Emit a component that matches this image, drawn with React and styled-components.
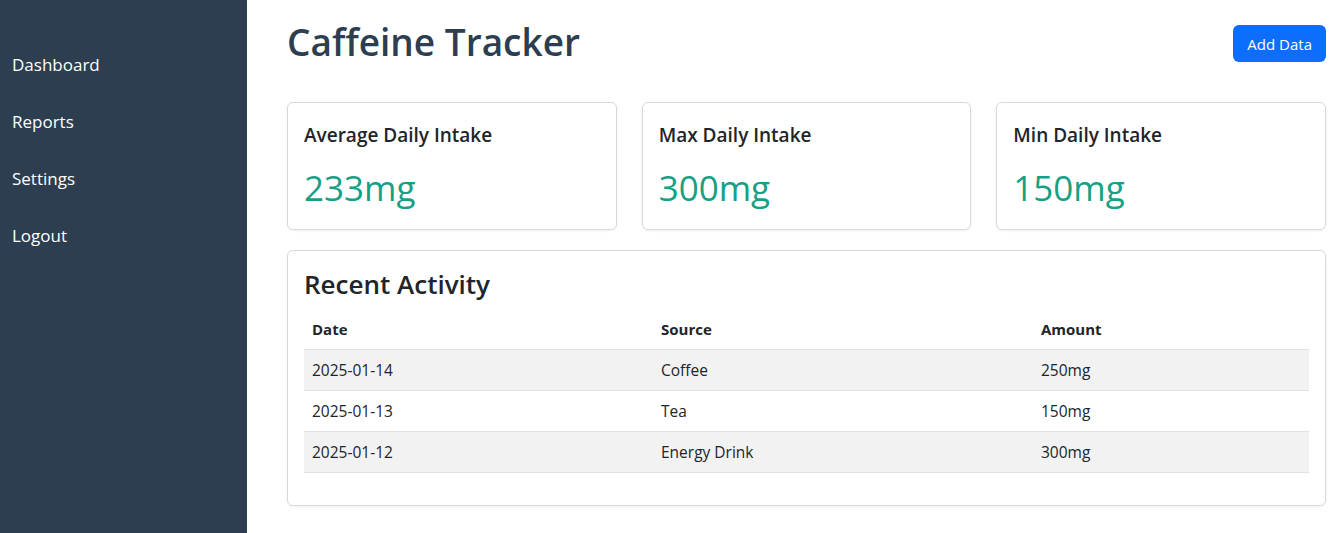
import React from "react";
import styled, { createGlobalStyle } from "styled-components";

const Global = createGlobalStyle`
  html, body { margin: 0; padding: 0; }
  body {
    font-family: "Open Sans", "Noto Sans", "Liberation Sans", sans-serif;
    color: #212529;
    background: #fff;
  }
  * { box-sizing: border-box; }
`;

const Layout = styled.div`
  display: flex;
  min-height: 533px;
`;

const Sidebar = styled.nav`
  width: 247px;
  flex: 0 0 247px;
  background: #2c3e50;
  padding-top: 36px;
`;

const NavList = styled.ul`
  list-style: none;
  margin: 0;
  padding: 0;
`;

const NavItem = styled.li`
  padding: 15px 12px;
  font-size: 17px;
  line-height: 27px;
  color: #fff;
`;

const Main = styled.main`
  flex: 1;
  padding: 20px 14px 20px 40px;
`;

const Header = styled.header`
  display: flex;
  justify-content: space-between;
  align-items: center;
  height: 48px;
  margin-bottom: 34px;
`;

const Title = styled.h1`
  margin: -5px 0 0;
  font-size: 37px;
  font-weight: 600;
  line-height: 48px;
  color: #2c3e50;
`;

const AddButton = styled.button`
  background: #0d6efd;
  color: #fff;
  border: none;
  border-radius: 6px;
  height: 37px;
  padding: 0 14px;
  margin-top: -1px;
  font-family: inherit;
  font-size: 15px;
  cursor: pointer;
`;

const Cards = styled.div`
  display: grid;
  grid-template-columns: repeat(3, 1fr);
  gap: 25px;
  margin-bottom: 20px;
`;

const Card = styled.section`
  border: 1px solid #d9d9d9;
  border-radius: 6px;
  box-shadow: 0 1px 3px rgba(0, 0, 0, 0.06);
  background: #fff;
  padding: 16px;
  min-height: ${(p) => (p.$stat ? "128px" : "auto")};
`;

const CardTitle = styled.h3`
  margin: 0 0 14px;
  font-size: 19px;
  font-weight: 600;
  line-height: 33px;
  color: #212529;
`;

const Value = styled.div`
  font-size: 35px;
  line-height: 44px;
  color: #16a085;
`;

const SectionTitle = styled.h2`
  margin: 0 0 8px;
  font-size: 26px;
  font-weight: 600;
  line-height: 34px;
  color: #212529;
`;

const Table = styled.table`
  width: 100%;
  border-collapse: collapse;
  margin-bottom: 16px;
  font-size: 15.5px;
`;

const Th = styled.th`
  text-align: left;
  font-weight: 700;
  font-size: 15px;
  padding: 8px;
  line-height: 24px;
  border-bottom: 1px solid #dee2e6;
  width: ${(p) => p.$w};
`;

const Row = styled.tr`
  background: ${(p) => (p.$striped ? "#f2f2f2" : "#fff")};
`;

const Td = styled.td`
  padding: 8px;
  line-height: 24px;
  border-bottom: 1px solid #dee2e6;
`;

const stats = [
  { label: "Average Daily Intake", value: "233mg" },
  { label: "Max Daily Intake", value: "300mg" },
  { label: "Min Daily Intake", value: "150mg" },
];

const rows = [
  ["2025-01-14", "Coffee", "250mg"],
  ["2025-01-13", "Tea", "150mg"],
  ["2025-01-12", "Energy Drink", "300mg"],
];

export default function App() {
  return (
    <>
      <Global />
      <Layout>
        <Sidebar>
          <NavList>
            {["Dashboard", "Reports", "Settings", "Logout"].map((n) => (
              <NavItem key={n}>{n}</NavItem>
            ))}
          </NavList>
        </Sidebar>
        <Main>
          <Header>
            <Title>Caffeine Tracker</Title>
            <AddButton>Add Data</AddButton>
          </Header>
          <Cards>
            {stats.map((s) => (
              <Card $stat key={s.label}>
                <CardTitle>{s.label}</CardTitle>
                <Value>{s.value}</Value>
              </Card>
            ))}
          </Cards>
          <Card>
            <SectionTitle>Recent Activity</SectionTitle>
            <Table>
              <thead>
                <tr>
                  <Th $w="349px">Date</Th>
                  <Th $w="380px">Source</Th>
                  <Th>Amount</Th>
                </tr>
              </thead>
              <tbody>
                {rows.map((r, i) => (
                  <Row key={r[0]} $striped={i % 2 === 0}>
                    {r.map((c) => (
                      <Td key={c}>{c}</Td>
                    ))}
                  </Row>
                ))}
              </tbody>
            </Table>
          </Card>
        </Main>
      </Layout>
    </>
  );
}
